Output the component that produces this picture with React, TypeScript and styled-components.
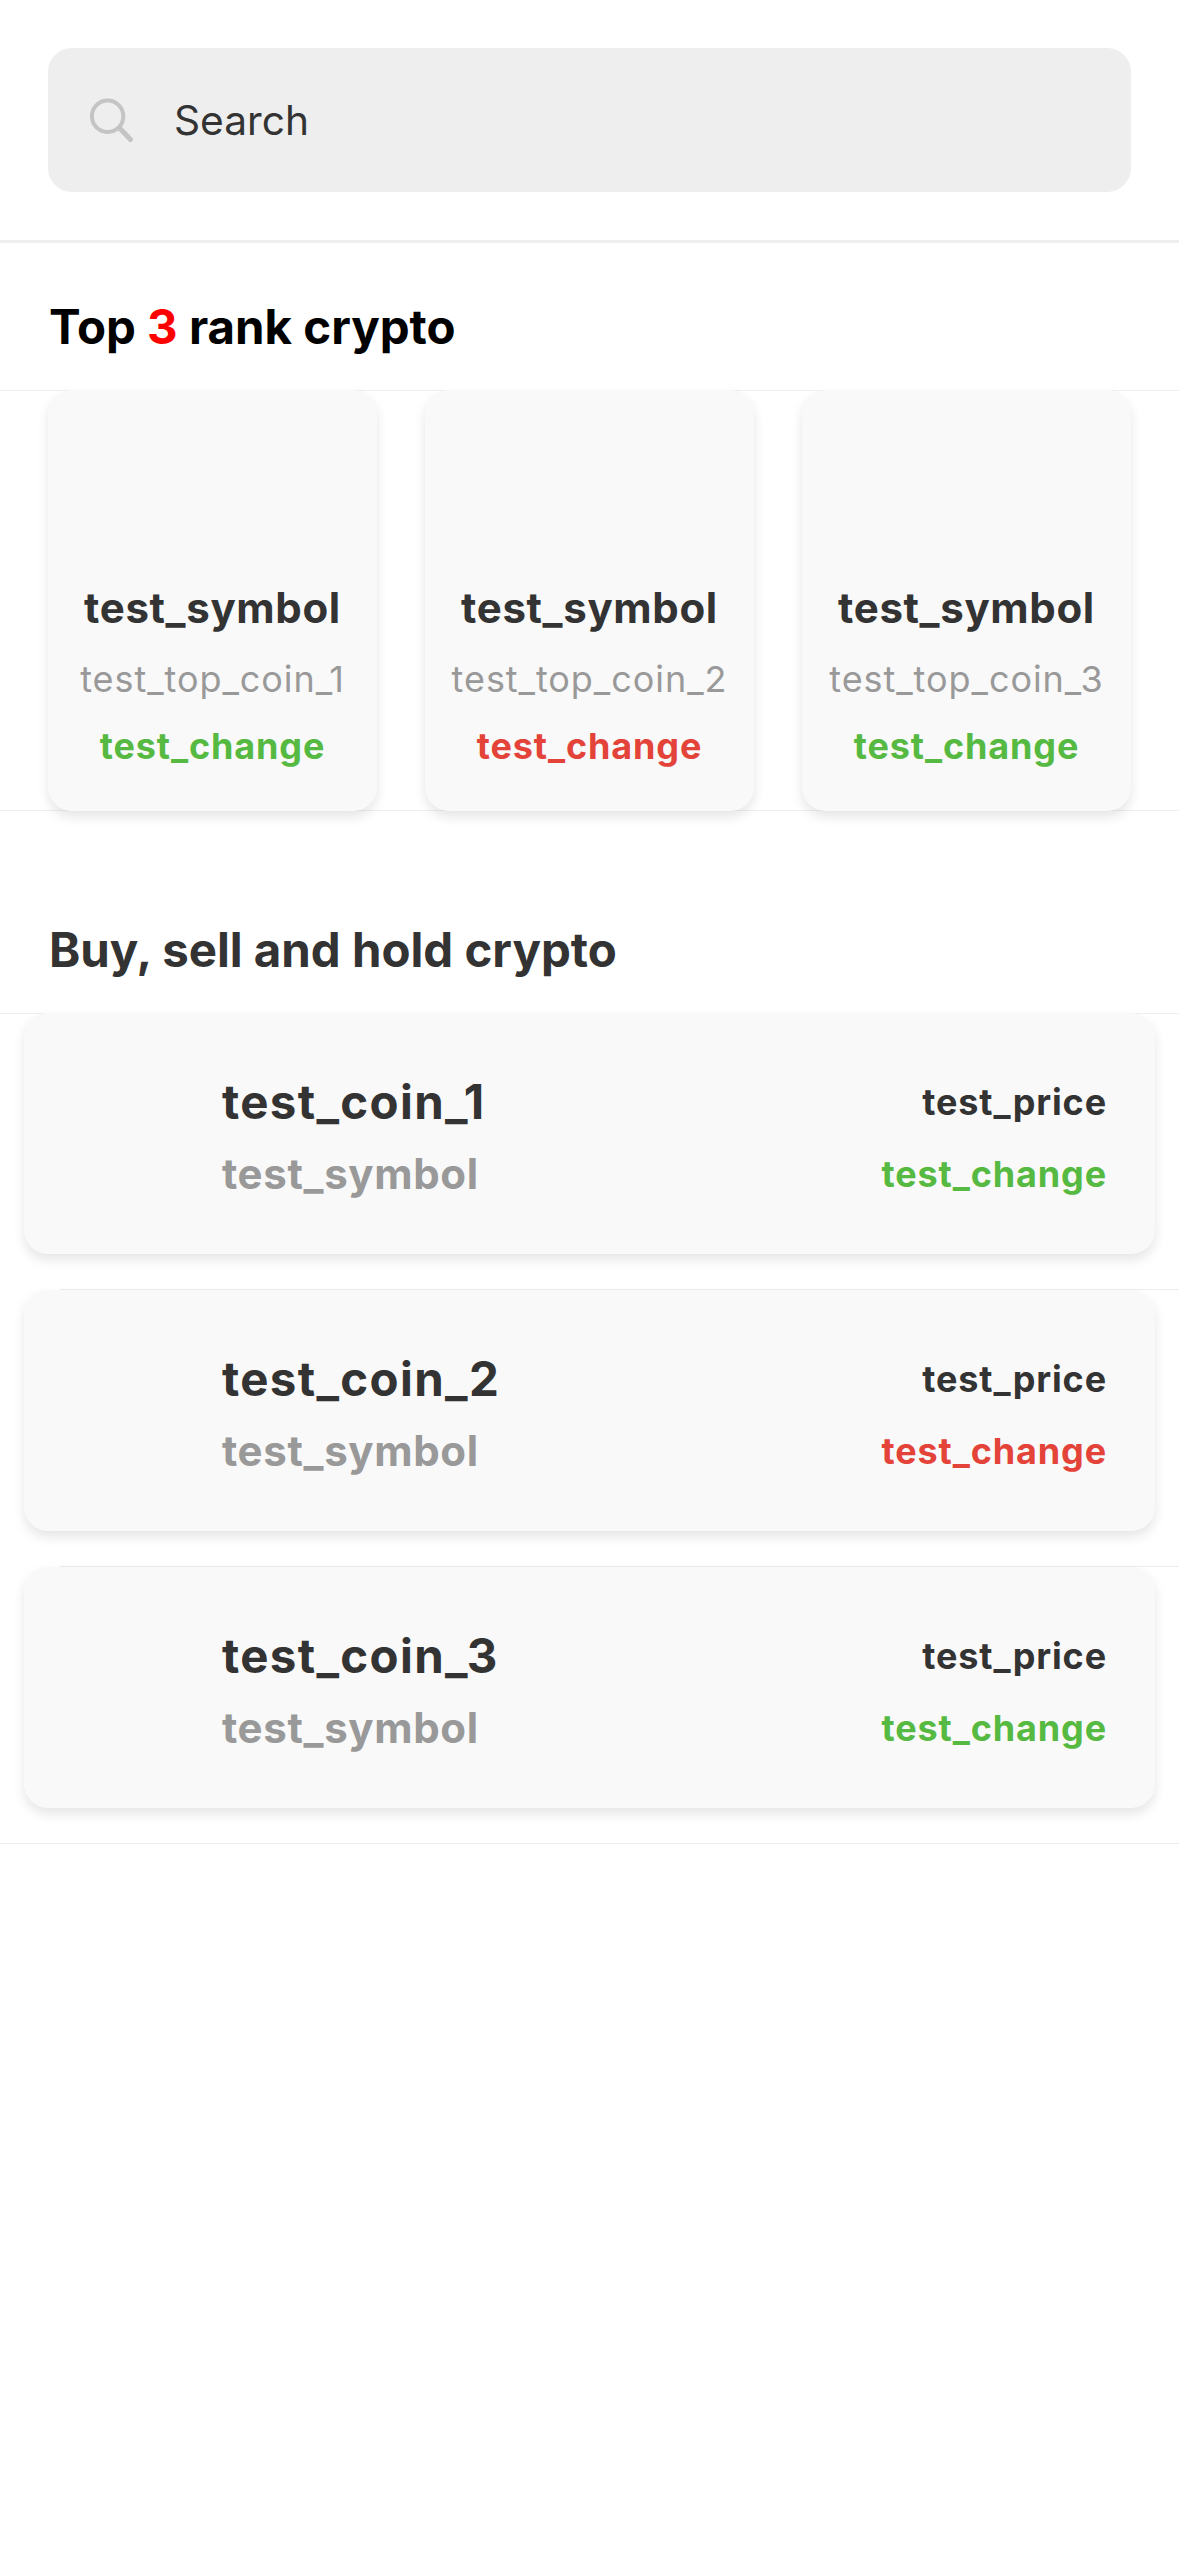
import React from "react";
import styled, { createGlobalStyle } from "styled-components";

type Trend = "up" | "down";

interface Coin {
  name: string;
  symbol: string;
  price: string;
  change: string;
  trend: Trend;
}

const trendColor: Record<Trend, string> = {
  up: "#55b942",
  down: "#e34339",
};

const topCoins: Coin[] = [
  { name: "test_top_coin_1", symbol: "test_symbol", price: "test_price", change: "test_change", trend: "up" },
  { name: "test_top_coin_2", symbol: "test_symbol", price: "test_price", change: "test_change", trend: "down" },
  { name: "test_top_coin_3", symbol: "test_symbol", price: "test_price", change: "test_change", trend: "up" },
];

const coins: Coin[] = [
  { name: "test_coin_1", symbol: "test_symbol", price: "test_price", change: "test_change", trend: "up" },
  { name: "test_coin_2", symbol: "test_symbol", price: "test_price", change: "test_change", trend: "down" },
  { name: "test_coin_3", symbol: "test_symbol", price: "test_price", change: "test_change", trend: "up" },
];

const GlobalStyle = createGlobalStyle`
  *, *::before, *::after {
    box-sizing: border-box;
  }
  body {
    margin: 0;
    background: #fff;
    font-family: Inter, "Liberation Sans", sans-serif;
    color: #333;
  }
`;

const Screen = styled.main`
  display: flex;
  flex-direction: column;
  width: 100%;
  min-height: 2556px;
  background: #fff;
`;

const Header = styled.header`
  padding: 48px;
  border-bottom: 3px solid #eee;
`;

const SearchBox = styled.div`
  display: flex;
  align-items: center;
  height: 144px;
  padding: 1px 40px 0;
  border-radius: 24px;
  background: #eee;
`;

const SearchIcon = styled.svg`
  flex: none;
  width: 48px;
  height: 48px;
  margin-right: 38px;
`;

const SearchLabel = styled.span`
  font-size: 40.7px;
  line-height: 49px;
`;

const Heading = styled.h2<{ $top: number; $height: number; $color: string }>`
  height: ${(p) => p.$height}px;
  margin: 0;
  padding: ${(p) => p.$top}px 48px 0 49px;
  font-size: 47.4px;
  font-weight: 700;
  line-height: 57px;
  color: ${(p) => p.$color};
`;

const Rank = styled.span`
  color: #f00;
`;

const TopGrid = styled.section`
  display: grid;
  grid-template-columns: repeat(3, 1fr);
  column-gap: 48px;
  height: 421px;
  padding: 0 48px;
  background:
    linear-gradient(#f0f0f0, #f0f0f0) top / 100% 1px no-repeat,
    linear-gradient(#f0f0f0, #f0f0f0) bottom / 100% 1px no-repeat;
`;

const Card = styled.article`
  border-radius: 24px;
  background: #f9f9f9;
  box-shadow: 0 6px 12px rgba(0, 0, 0, 0.1);
`;

const TopCard = styled(Card)`
  display: flex;
  flex-direction: column;
  align-items: center;
  gap: 25px;
  padding: 194px 0 0;
`;

const SymbolText = styled.span<{ $muted?: boolean }>`
  margin-bottom: 2px;
  font-size: 42px;
  font-weight: 700;
  line-height: 47px;
  letter-spacing: 0.65px;
  color: ${(p) => (p.$muted ? "#999" : "#333")};
`;

const TopName = styled.span`
  font-size: 36px;
  line-height: 42px;
  letter-spacing: 0.95px;
  color: #999;
`;

const Figure = styled.span<{ $color?: string }>`
  font-size: 36px;
  font-weight: 700;
  line-height: 42px;
  letter-spacing: 0.87px;
  color: ${(p) => p.$color ?? "#333"};
`;

const CoinList = styled.section`
  display: flex;
  flex-direction: column;
  border-top: 1px solid #f0f0f0;
`;

const CoinCell = styled.div<{ $inset: number }>`
  height: 277px;
  margin-top: -1px;
  padding: 0 24px 36px;
  background: linear-gradient(#ededed, #ededed) ${(p) => p.$inset}px bottom / 100% 1px no-repeat;

  & + & {
    margin-top: 0;
  }
`;

const CoinCard = styled(Card)`
  display: flex;
  align-items: flex-start;
  height: 241px;
  padding: 60px 48px 0;
`;

const LogoSlot = styled.div`
  flex: none;
  width: 120px;
  height: 120px;
  margin-right: 30px;
`;

const Names = styled.div`
  display: flex;
  flex: 1;
  flex-direction: column;
  gap: 20px;
`;

const CoinName = styled.span`
  font-size: 47.4px;
  font-weight: 700;
  line-height: 57px;
  letter-spacing: 1.35px;
`;

const Figures = styled.div`
  display: flex;
  flex-direction: column;
  align-items: flex-end;
  gap: 30px;
  padding-top: 8px;
`;

export default function App() {
  return (
    <Screen>
      <GlobalStyle />
      <Header>
        <SearchBox>
          <SearchIcon viewBox="0 0 48 48" fill="none" stroke="#c4c4c4" strokeLinecap="round">
            <circle cx="19.6" cy="19.2" r="15.7" strokeWidth="4" />
            <path d="M31.5 31 42.5 42.5" strokeWidth="5" />
          </SearchIcon>
          <SearchLabel>Search</SearchLabel>
        </SearchBox>
      </Header>

      <Heading $top={55} $height={147} $color="#000">
        Top <Rank>3</Rank> rank crypto
      </Heading>
      <TopGrid>
        {topCoins.map((coin) => (
          <TopCard key={coin.name}>
            <SymbolText>{coin.symbol}</SymbolText>
            <TopName>{coin.name}</TopName>
            <Figure $color={trendColor[coin.trend]}>{coin.change}</Figure>
          </TopCard>
        ))}
      </TopGrid>

      <Heading $top={110} $height={202} $color="#333">
        Buy, sell and hold crypto
      </Heading>
      <CoinList>
        {coins.map((coin, index) => (
          <CoinCell key={coin.name} $inset={index === coins.length - 1 ? 0 : 60}>
            <CoinCard>
              <LogoSlot />
              <Names>
                <CoinName>{coin.name}</CoinName>
                <SymbolText $muted>{coin.symbol}</SymbolText>
              </Names>
              <Figures>
                <Figure>{coin.price}</Figure>
                <Figure $color={trendColor[coin.trend]}>{coin.change}</Figure>
              </Figures>
            </CoinCard>
          </CoinCell>
        ))}
      </CoinList>
    </Screen>
  );
}
